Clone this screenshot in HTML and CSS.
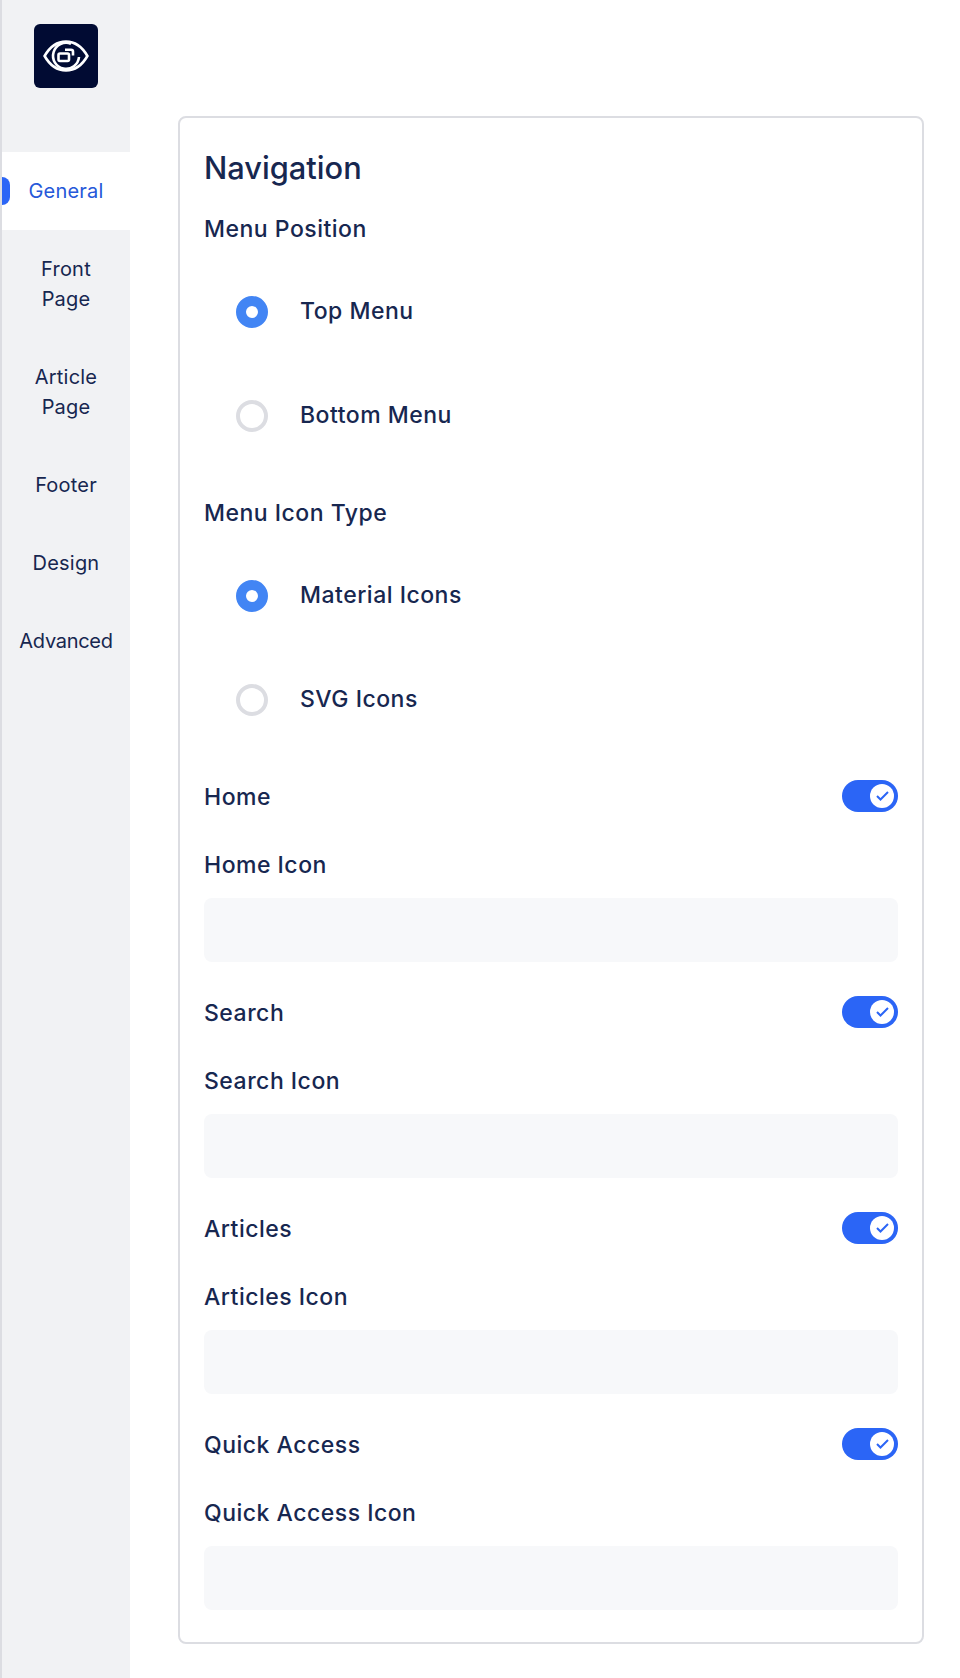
FILE: index.html
```html
<!DOCTYPE html>
<html lang="en">
<head>
<meta charset="utf-8">
<title>Settings</title>
<link rel="stylesheet" href="styles.css">
</head>
<body>
<aside class="sidebar">
  <div class="logo-wrap">
    <div class="logo">
      <svg width="46" height="32" viewBox="0 0 46 32" fill="none" stroke="#fff" stroke-width="2.600">
        <path d="M1.600 16C7 6.500 14.500 1.600 23 1.600S39 6.500 44.400 16C39 25.500 31.500 30.400 23 30.400S7 25.500 1.600 16Z"/>
        <path d="M28 3.800A13 13 0 1 0 36 17"/>
        <rect x="15.500" y="13.500" width="10.500" height="7.500" rx="1.500"/>
        <path d="M22 9.800H28A2 2 0 0 1 30 11.800V15.500"/>
      </svg>
    </div>
  </div>
  <nav class="nav">
    <a class="nav-item active">General</a>
    <a class="nav-item">Front<br>Page</a>
    <a class="nav-item">Article<br>Page</a>
    <a class="nav-item">Footer</a>
    <a class="nav-item">Design</a>
    <a class="nav-item tight">Advanced</a>
  </nav>
</aside>
<main class="main">
  <section class="card">
    <h2 class="title">Navigation</h2>
    <div class="label label-position">Menu Position</div>
    <div class="radio-row first"><span class="radio on"></span><span class="label">Top Menu</span></div>
    <div class="radio-row"><span class="radio"></span><span class="label">Bottom Menu</span></div>
    <div class="label label-icon-type">Menu Icon Type</div>
    <div class="radio-row second"><span class="radio on"></span><span class="label">Material Icons</span></div>
    <div class="radio-row"><span class="radio"></span><span class="label">SVG Icons</span></div>

    <div class="group first-group">
      <div class="toggle-row"><span class="label">Home</span><span class="toggle"><span class="knob"><svg width="13" height="10" viewBox="0 0 13 10" fill="none" stroke="#2b65f6" stroke-width="2"><path d="M1 5L4.500 8.500L12 1"/></svg></span></span></div>
      <div class="label field-label">Home Icon</div>
      <div class="input"></div>
    </div>
    <div class="group">
      <div class="toggle-row"><span class="label">Search</span><span class="toggle"><span class="knob"><svg width="13" height="10" viewBox="0 0 13 10" fill="none" stroke="#2b65f6" stroke-width="2"><path d="M1 5L4.500 8.500L12 1"/></svg></span></span></div>
      <div class="label field-label">Search Icon</div>
      <div class="input"></div>
    </div>
    <div class="group">
      <div class="toggle-row"><span class="label">Articles</span><span class="toggle"><span class="knob"><svg width="13" height="10" viewBox="0 0 13 10" fill="none" stroke="#2b65f6" stroke-width="2"><path d="M1 5L4.500 8.500L12 1"/></svg></span></span></div>
      <div class="label field-label">Articles Icon</div>
      <div class="input"></div>
    </div>
    <div class="group">
      <div class="toggle-row"><span class="label">Quick Access</span><span class="toggle"><span class="knob"><svg width="13" height="10" viewBox="0 0 13 10" fill="none" stroke="#2b65f6" stroke-width="2"><path d="M1 5L4.500 8.500L12 1"/></svg></span></span></div>
      <div class="label field-label">Quick Access Icon</div>
      <div class="input"></div>
    </div>
  </section>
</main>
</body>
</html>
```
FILE: styles.css
```css
* { box-sizing: border-box; }
html, body { margin: 0; padding: 0; }
body {
  display: flex;
  min-height: 1678px;
  background: #fff;
  font-family: Inter, "Liberation Sans", sans-serif;
  color: #172750;
}
.sidebar {
  width: 130px;
  flex: none;
  background: #f1f2f4;
  border-left: 2px solid #dcdde2;
}
.logo-wrap {
  height: 152px;
  padding-top: 24px;
  padding-left: 32px;
}
.logo {
  width: 64px;
  height: 64px;
  border-radius: 6px;
  background: #010b33;
  display: flex;
  align-items: center;
  justify-content: center;
}
.nav { display: flex; flex-direction: column; }
.nav-item {
  position: relative;
  padding: 24px 4px;
  text-align: center;
  font-size: 20px;
  line-height: 30px;
  letter-spacing: 0.2px;
}
.nav-item.tight { letter-spacing: -0.3px; }
.nav-item.active {
  background: #fff;
  color: #2558d9;
}
.nav-item.active::before {
  content: "";
  position: absolute;
  left: 0;
  top: 25px;
  width: 8px;
  height: 28px;
  border-radius: 0 8px 8px 0;
  background: #2b65f6;
}
.main {
  flex: 1;
  padding: 116px 36px 34px 48px;
}
.card {
  border: 2px solid #dcdde2;
  border-radius: 8px;
  padding: 26px 24px 32px;
  height: 1528px;
}
.title {
  margin: 0;
  font-size: 30.800px;
  font-weight: 500;
  line-height: 48px;
}
.label {
  font-size: 23px;
  font-weight: 500;
  line-height: 32px;
  letter-spacing: 0.5px;
}
.label-position { margin-top: 21px; }
.label-icon-type { margin-top: 29px; }
.radio-row {
  display: flex;
  align-items: center;
  height: 104px;
  padding-left: 32px;
  gap: 32px;
}
.radio-row .label { margin-bottom: 2px; }
.radio-row.first { margin-top: 15px; }
.radio-row.second { margin-top: 15px; }
.radio {
  width: 32px;
  height: 32px;
  border-radius: 50%;
  border: 4px solid #dcdde2;
  background: #fff;
}
.radio.on {
  border: 10px solid #4285f4;
}
.group { margin-top: 34px; }
.first-group { margin-top: 28px; }
.toggle-row {
  display: flex;
  justify-content: space-between;
  align-items: center;
  height: 32px;
}
.toggle-row .label { margin-top: 2px; }
.toggle {
  width: 56px;
  height: 32px;
  border-radius: 16px;
  background: #2b65f6;
  display: flex;
  align-items: center;
  justify-content: flex-end;
  padding-right: 4px;
}
.knob {
  width: 24px;
  height: 24px;
  border-radius: 50%;
  background: #fff;
  display: flex;
  align-items: center;
  justify-content: center;
}
.field-label { margin-top: 37px; }
.input {
  margin-top: 17px;
  height: 64px;
  border-radius: 8px;
  background: #f7f8fa;
}
```
